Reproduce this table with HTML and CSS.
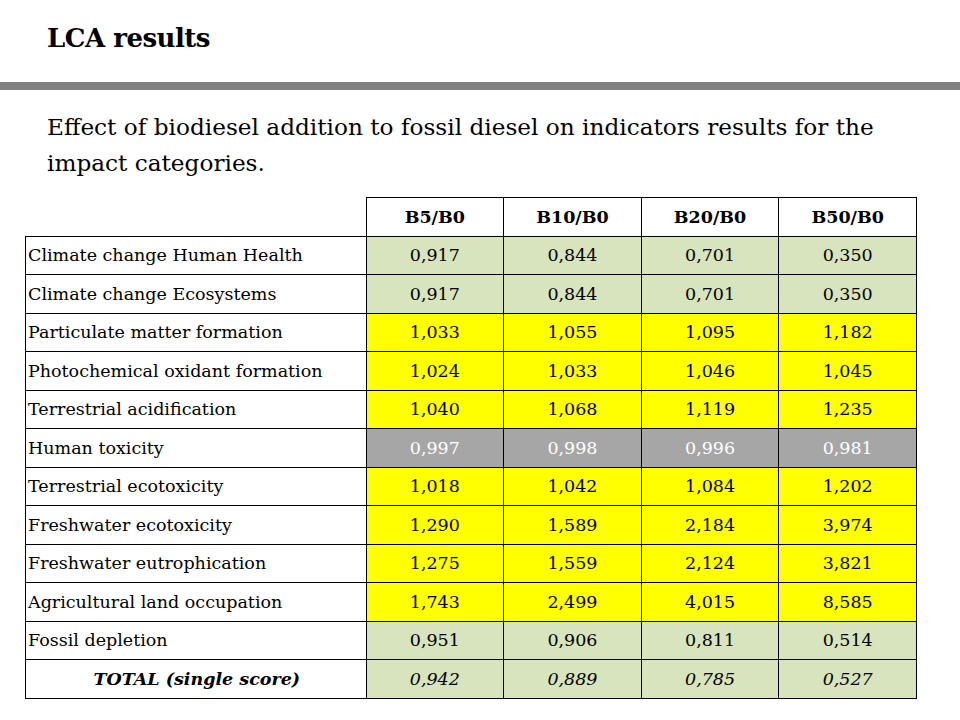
FILE: index.html
```html
<!DOCTYPE html>
<html>
<head>
<meta charset="utf-8">
<link rel="stylesheet" href="styles.css">
</head>
<body>
<header class="top">
  <h1 class="title">LCA results</h1>
</header>
<div class="rule"></div>
<p class="lead">Effect of biodiesel addition to fossil diesel on indicators results for the impact categories.</p>
<table class="results">
  <thead>
    <tr><th class="blank"></th><th>B5/B0</th><th>B10/B0</th><th>B20/B0</th><th>B50/B0</th></tr>
  </thead>
  <tbody>
    <tr class="g"><td class="lbl">Climate change Human Health</td><td>0,917</td><td>0,844</td><td>0,701</td><td>0,350</td></tr>
    <tr class="g"><td class="lbl">Climate change Ecosystems</td><td>0,917</td><td>0,844</td><td>0,701</td><td>0,350</td></tr>
    <tr class="y"><td class="lbl">Particulate matter formation</td><td>1,033</td><td>1,055</td><td>1,095</td><td>1,182</td></tr>
    <tr class="y"><td class="lbl">Photochemical oxidant formation</td><td>1,024</td><td>1,033</td><td>1,046</td><td>1,045</td></tr>
    <tr class="y"><td class="lbl">Terrestrial acidification</td><td>1,040</td><td>1,068</td><td>1,119</td><td>1,235</td></tr>
    <tr class="gr"><td class="lbl">Human toxicity</td><td>0,997</td><td>0,998</td><td>0,996</td><td>0,981</td></tr>
    <tr class="y"><td class="lbl">Terrestrial ecotoxicity</td><td>1,018</td><td>1,042</td><td>1,084</td><td>1,202</td></tr>
    <tr class="y"><td class="lbl">Freshwater ecotoxicity</td><td>1,290</td><td>1,589</td><td>2,184</td><td>3,974</td></tr>
    <tr class="y"><td class="lbl">Freshwater eutrophication</td><td>1,275</td><td>1,559</td><td>2,124</td><td>3,821</td></tr>
    <tr class="y"><td class="lbl">Agricultural land occupation</td><td>1,743</td><td>2,499</td><td>4,015</td><td>8,585</td></tr>
    <tr class="g"><td class="lbl">Fossil depletion</td><td>0,951</td><td>0,906</td><td>0,811</td><td>0,514</td></tr>
    <tr class="g total"><td class="lbl">TOTAL (single score)</td><td>0,942</td><td>0,889</td><td>0,785</td><td>0,527</td></tr>
  </tbody>
</table>
</body>
</html>
```
FILE: styles.css
```css
html, body {
  margin: 0;
  padding: 0;
  background: #ffffff;
  color: #000000;
  font-family: "DejaVu Serif", "Liberation Serif", serif;
}
.top {
  height: 82px;
  padding-left: 47px;
  box-sizing: border-box;
  padding-top: 20px;
}
.title {
  margin: 0;
  font-size: 26px;
  line-height: 36px;
  font-weight: bold;
  letter-spacing: -0.5px;
}
.rule {
  height: 8px;
  background: #808080;
}
.lead {
  margin: 19px 0 0 47px;
  width: 845px;
  font-size: 23.2px;
  line-height: 36px;
}
.results {
  margin: 16px 0 0 25px;
  border-collapse: collapse;
  width: 892px;
  table-layout: fixed;
  font-size: 17.5px;
}
.results th, .results td {
  border: 1px solid #000;
  height: 37.5px;
  padding: 0;
  text-align: center;
}
.results th.blank {
  width: 340px;
  border-top: none;
  border-left: none;
}
.results th {
  font-weight: bold;
  background: #fff;
}
.results td.lbl {
  text-align: left;
  padding-left: 2px;
  background: #fff;
  color: #000;
  white-space: nowrap;
}
.g td { background: #d7e4bd; }
.y td { background: #ffff00; }
.gr td { background: #a6a6a6; color: #fff; }
.total td { font-style: italic; }
.total td.lbl { font-weight: bold; text-align: center; }
```
